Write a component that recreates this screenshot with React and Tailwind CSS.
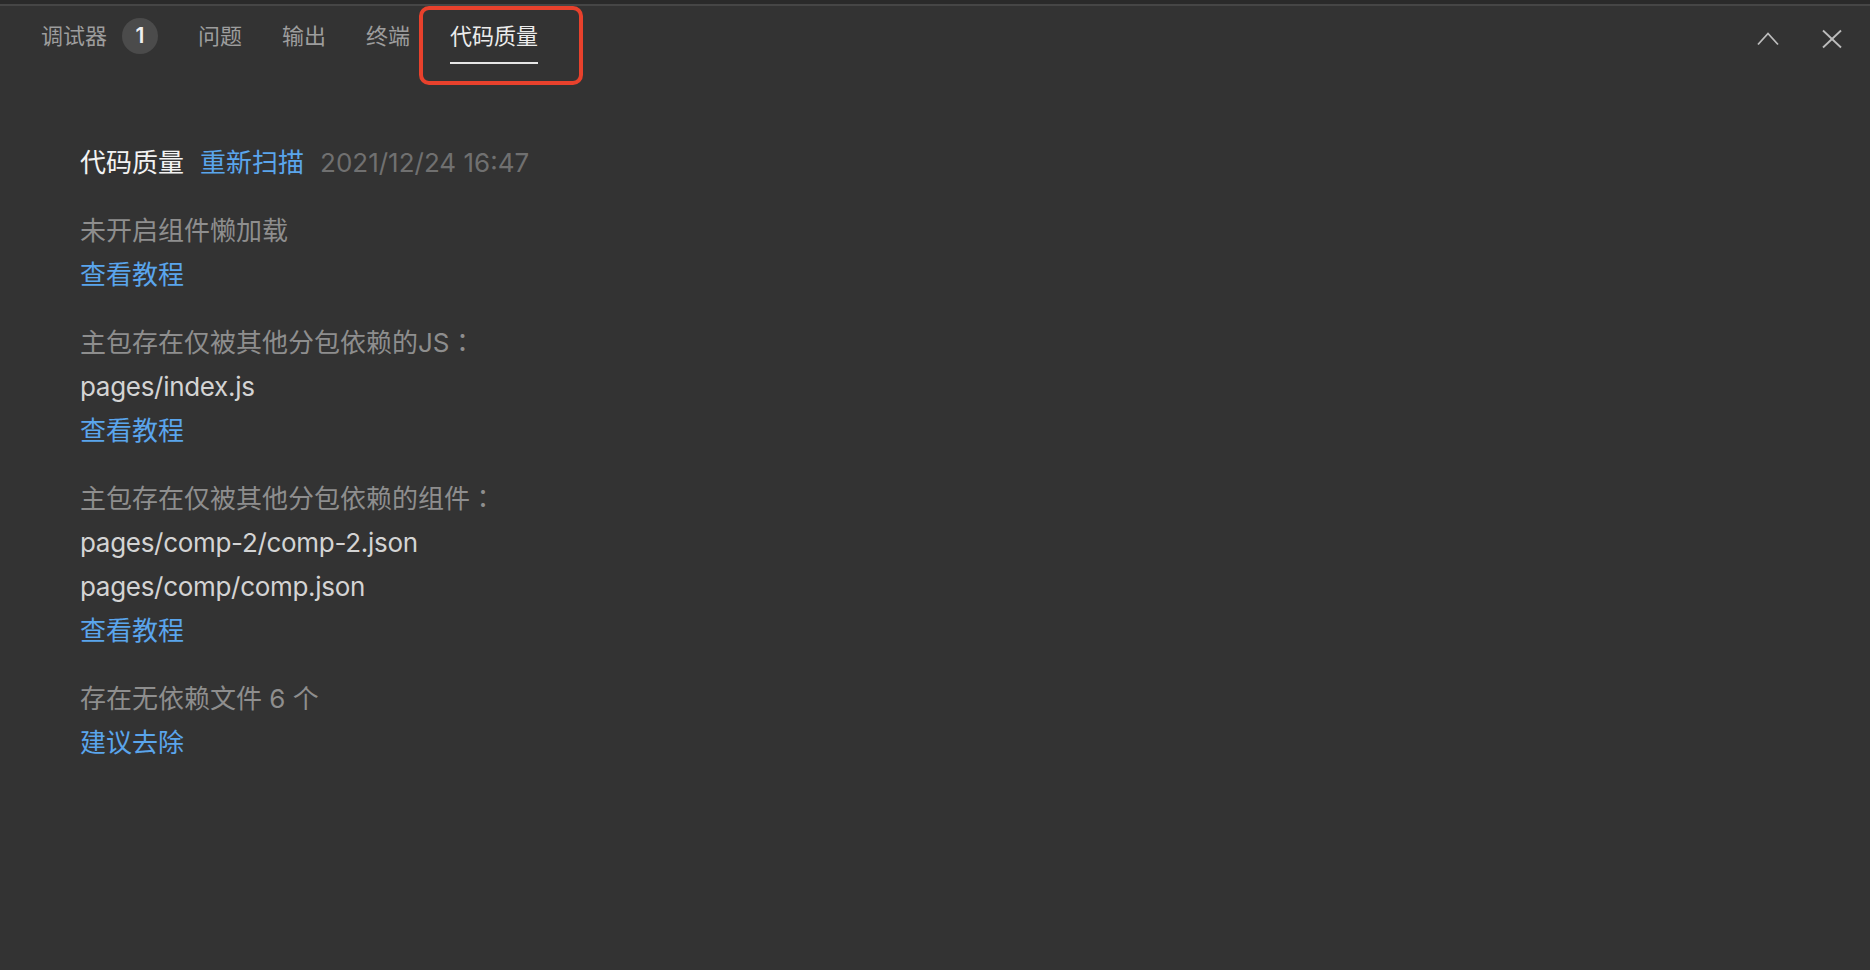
const FONT = { fontFamily: '"Inter", "Noto Sans CJK SC", sans-serif' };

const tabs = [
  { label: '调试器', badge: 1 },
  { label: '问题' },
  { label: '输出' },
  { label: '终端' },
  { label: '代码质量', active: true },
];

const groups = [
  { lines: [{ text: '未开启组件懒加载', kind: 'desc' }], link: '查看教程' },
  {
    lines: [
      { text: '主包存在仅被其他分包依赖的JS', colon: true, kind: 'desc' },
      { text: 'pages/index.js', kind: 'path' },
    ],
    link: '查看教程',
  },
  {
    lines: [
      { text: '主包存在仅被其他分包依赖的组件', colon: true, kind: 'desc' },
      { text: 'pages/comp-2/comp-2.json', kind: 'path' },
      { text: 'pages/comp/comp.json', kind: 'path' },
    ],
    link: '查看教程',
  },
  { lines: [{ text: '存在无依赖文件 6 个', kind: 'desc' }], link: '建议去除' },
];

function ChevronUp() {
  return (
    <svg width="22" height="14" viewBox="0 0 22 14" fill="none">
      <polyline points="1,12.5 11,1.5 21,12.5" stroke="#bdbdbd" strokeWidth="1.8" />
    </svg>
  );
}

function Close() {
  return (
    <svg width="20" height="20" viewBox="0 0 20 20" fill="none">
      <line x1="1" y1="1.5" x2="19" y2="18.5" stroke="#bdbdbd" strokeWidth="1.8" />
      <line x1="19" y1="1.5" x2="1" y2="18.5" stroke="#bdbdbd" strokeWidth="1.8" />
    </svg>
  );
}

export default function App() {
  return (
    <div className="h-screen w-full bg-[#333333] flex flex-col" style={FONT}>
      {/* top edge */}
      <div className="h-[4px] bg-[#2a2a2a]" />
      <div className="h-[2px] bg-[#464646]" />

      {/* tab bar */}
      <div className="relative h-[60px] flex items-center pl-[21px] pr-[28px]">
        {tabs.map(t => (
          <div key={t.label} className="relative h-full flex items-center px-[20px]">
            <span className={`text-[22px] leading-none ${t.active ? 'text-[#ececec]' : 'text-[#9d9d9d]'}`}>{t.label}</span>
            {t.badge && (
              <span className="ml-[15px] w-[36px] h-[36px] rounded-full bg-[#4b4b4b] flex items-center justify-center text-[21px] font-semibold text-[#f0f0f0]">
                {t.badge}
              </span>
            )}
            {t.active && <span className="absolute left-[20px] right-[20px] top-[56px] h-[2px] bg-[#e6e6e6]" />}
          </div>
        ))}

        {/* highlight annotation */}
        <div className="absolute left-[419px] top-0 w-[164px] h-[79px] border-[4px] border-[#e8412c] rounded-[10px]" />

        <div className="ml-auto flex items-center gap-[43px] mt-[6px]">
          <ChevronUp />
          <Close />
        </div>
      </div>

      {/* content */}
      <div className="pl-[80px] pt-[75px] text-[26px] leading-[44px]">
        <div className="mb-[24px] h-[44px] flex items-center">
          <span className="text-[#f2f2f2]">代码质量</span>
          <span className="ml-[16px] text-[#5aa5ec]">重新扫描</span>
          <span className="ml-[16px] text-[#707070]">2021/12/24 16:47</span>
        </div>

        {groups.map((g, i) => (
          <div key={i} className="mb-[24px]">
            {g.lines.map((l, j) => (
              <div
                key={j}
                className={`h-[44px] whitespace-nowrap ${l.kind === 'path' ? 'text-[#d4d4d4] tracking-[-0.3px]' : 'text-[#8e8e8e]'}`}
              >
                {l.text}
                {l.colon && (
                  <span className="leading-none" style={{ fontFamily: '"Noto Sans CJK TC", sans-serif' }}>：</span>
                )}
              </div>
            ))}
            <div className="h-[44px] text-[#5aa5ec]">{g.link}</div>
          </div>
        ))}
      </div>
    </div>
  );
}
